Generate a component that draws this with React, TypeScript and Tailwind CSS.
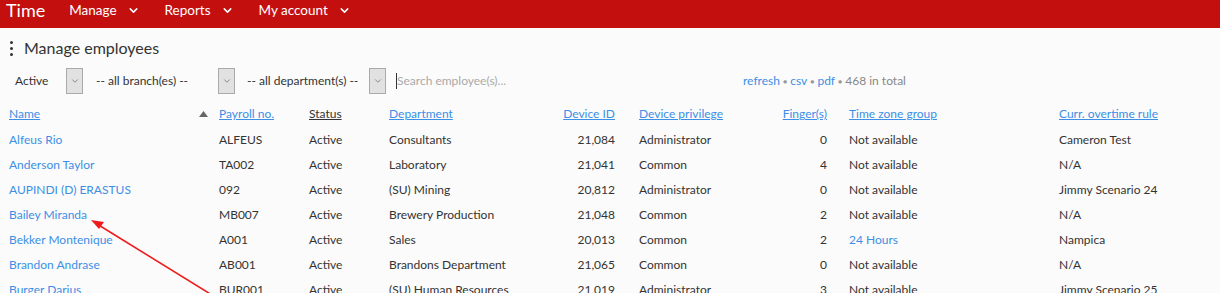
import { ChevronDown } from "lucide-react";

const rows = [
	["Alfeus Rio", "ALFEUS", "Active", "Consultants", "21,084", "Administrator", "0", "Not available", "Cameron Test"],
	["Anderson Taylor", "TA002", "Active", "Laboratory", "21,041", "Common", "4", "Not available", "N/A"],
	["AUPINDI (D) ERASTUS", "092", "Active", "(SU) Mining", "20,812", "Administrator", "0", "Not available", "Jimmy Scenario 24"],
	["Bailey Miranda", "MB007", "Active", "Brewery Production", "21,048", "Common", "2", "Not available", "N/A"],
	["Bekker Montenique", "A001", "Active", "Sales", "20,013", "Common", "2", "24 Hours", "Nampica"],
	["Brandon Andrase", "AB001", "Active", "Brandons Department", "21,065", "Common", "0", "Not available", "N/A"],
	["Burger Darius", "BUR001", "Active", "(SU) Human Resources", "21,019", "Administrator", "3", "Not available", "Jimmy Scenario 25"],
];

const grid = "grid grid-cols-[210px_90px_80px_150px_76px_142px_70px_232px_1fr] pl-[9px]";

function SelectBox({ label, width }: { label: string; width: string }) {
	return (
		<div className={`flex items-center ${width}`}>
			<span className="flex-1 truncate">{label}</span>
			<span className="flex h-[26px] w-[17px] items-center justify-center border border-[#aaaaaa] bg-[#e1e1e1] text-[#555]">
				<ChevronDown size={10} strokeWidth={1.5} />
			</span>
		</div>
	);
}

function Menu({ label }: { label: string }) {
	return (
		<div className="flex items-center gap-[10px]">
			<span>{label}</span>
			<ChevronDown size={13} strokeWidth={2.75} />
		</div>
	);
}

export default function App() {
	return (
		<div className="relative h-[293px] w-[1220px] overflow-hidden bg-[#fbfbfb] text-[12px] text-[#333] [font-family:Lato,'Liberation_Sans',sans-serif]">
			<div className="h-[28px] bg-[#c40f0f] pl-[6px] text-white">
				<div className="flex h-[20px] items-center">
					<span className="text-[18px] leading-none">Time</span>
					<div className="ml-[24px] flex items-center gap-[25px] text-[13.5px]">
						<Menu label="Manage" />
						<Menu label="Reports" />
						<Menu label="My account" />
					</div>
				</div>
			</div>

			<div className="mt-[10px] flex h-[20px] items-center pl-[10px]">
				<div className="flex flex-col gap-[3px]">
					<span className="h-[3px] w-[3px] rounded-full bg-[#333]" />
					<span className="h-[3px] w-[3px] rounded-full bg-[#333]" />
					<span className="h-[3px] w-[3px] rounded-full bg-[#333]" />
				</div>
				<span className="ml-[11px] text-[16px]">Manage employees</span>
			</div>

			<div className="mt-[10px] flex h-[26px] items-center pl-[15px]">
				<SelectBox label="Active" width="w-[68px]" />
				<div className="ml-[13px]">
					<SelectBox label="-- all branch(es) --" width="w-[139px]" />
				</div>
				<div className="ml-[12px]">
					<SelectBox label="-- all department(s) --" width="w-[139px]" />
				</div>
				<div className="ml-[10px] flex w-[347px] items-center">
					<span className="h-[16px] w-px bg-[#333]" />
					<span className="text-[#aaa]">Search employee(s)...</span>
				</div>
				<div className="flex items-center gap-[3px]">
					<span className="text-[#3c8fe6]">refresh</span>
					<span className="text-[7px] text-[#999]">●</span>
					<span className="text-[#3c8fe6]">csv</span>
					<span className="text-[7px] text-[#999]">●</span>
					<span className="text-[#3c8fe6]">pdf</span>
					<span className="text-[7px] text-[#999]">●</span>
					<span className="text-[#888]">468 in total</span>
				</div>
			</div>

			<div className={`${grid} mt-[10px] h-[20px] items-center`}>
				<div className="flex items-center justify-between pr-[11px]">
					<span className="text-[#3c8fe6] underline">Name</span>
					<svg width="9" height="6" viewBox="0 0 9 6">
						<path d="M0 6 L4.5 0 L9 6 Z" fill="#666" />
					</svg>
				</div>
				<span className="text-[#3c8fe6] underline">Payroll no.</span>
				<span className="underline">Status</span>
				<span className="text-[#3c8fe6] underline">Department</span>
				<span className="text-right text-[#3c8fe6] underline">Device ID</span>
				<span className="pl-[24px] text-[#3c8fe6] underline">Device privilege</span>
				<span className="text-right text-[#3c8fe6] underline">Finger(s)</span>
				<span className="pl-[22px] text-[#3c8fe6] underline">Time zone group</span>
				<span className="text-[#3c8fe6] underline">Curr. overtime rule</span>
			</div>

			<div className="mt-[3px]">
				{rows.map((r) => (
					<div key={r[0]} className={`${grid} h-[25px] items-center`}>
						<span className="text-[#3c8fe6]">{r[0]}</span>
						<span>{r[1]}</span>
						<span>{r[2]}</span>
						<span>{r[3]}</span>
						<span className="text-right">{r[4]}</span>
						<span className="pl-[24px]">{r[5]}</span>
						<span className="text-right">{r[6]}</span>
						<span className={`pl-[22px] ${r[7] === "24 Hours" ? "text-[#3c8fe6]" : ""}`}>{r[7]}</span>
						<span>{r[8]}</span>
					</div>
				))}
			</div>

			<svg className="pointer-events-none absolute left-0 top-0" width="1220" height="293">
				<line x1="212" y1="295" x2="97" y2="224" stroke="#ee1c1c" strokeWidth="1.6" />
				<path d="M91 220 L104 222 L99 229 Z" fill="#ee1c1c" />
			</svg>
		</div>
	);
}
